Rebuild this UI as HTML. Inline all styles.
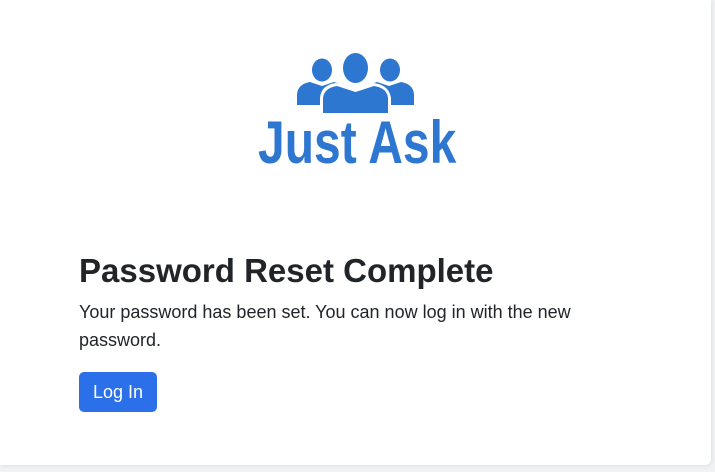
<!DOCTYPE html>
<html><head><style>
html,body{margin:0;padding:0;}
body{width:715px;height:472px;background:#f1f2f4;position:relative;overflow:hidden;font-family:"Liberation Sans",sans-serif;}
.card{position:absolute;left:0;top:0;width:711px;height:465px;background:#fff;border-radius:0 0 6px 0;box-shadow:1px 1px 4px rgba(0,0,0,.08);}
.logo{position:absolute;left:258px;top:113px;width:197px;height:60px;}
.logo span{position:absolute;left:0;top:0;font-weight:bold;font-size:60px;color:#2e77d0;transform:scaleX(0.8);transform-origin:0 0;white-space:nowrap;line-height:60px;}
h1{position:absolute;left:79px;top:250px;margin:0;font-size:33px;font-weight:bold;color:#212529;line-height:42px;white-space:nowrap;}
p{position:absolute;left:79px;top:298px;margin:0;width:510px;font-size:18px;line-height:28px;color:#212529;}
.btn{position:absolute;left:79px;top:372px;width:78px;height:40px;background:#2b70e8;border-radius:5px;color:#fff;font-size:18px;line-height:40px;text-align:center;}
</style></head><body>
<div class="card">
<svg style="position:absolute;left:0;top:0" width="715" height="472">
<g fill="#2e77d0">
<ellipse cx="322" cy="70" rx="10" ry="11.5"/>
<path d="M297 105 L297 94 Q298 84 310 82 L322 86 L334 82 Q338 83 340 85 L333 105 Z"/>
<ellipse cx="390" cy="70" rx="10" ry="11.5"/>
<path d="M414 105 L414 94 Q413 84 401 82 L389 86 L377 82 Q373 83 371 85 L378 105 Z"/>
</g>
<path d="M320 114 L320 98 Q321 85 336 83 L355 89 L374 83 Q389 85 391 98 L391 114 Z" fill="#fff"/>
<g fill="#2e77d0">
<ellipse cx="355.5" cy="68" rx="12.5" ry="15"/>
<path d="M323 113 L323 98 Q324 88 337 86 L355.5 92 L374 86 Q387 88 388 98 L388 113 Z"/>
</g>
</svg>
<div class="logo"><span>Just Ask</span></div>
<h1>Password Reset Complete</h1>
<p>Your password has been set. You can now log in with the new password.</p>
<div class="btn">Log In</div>
</div>
</body></html>
